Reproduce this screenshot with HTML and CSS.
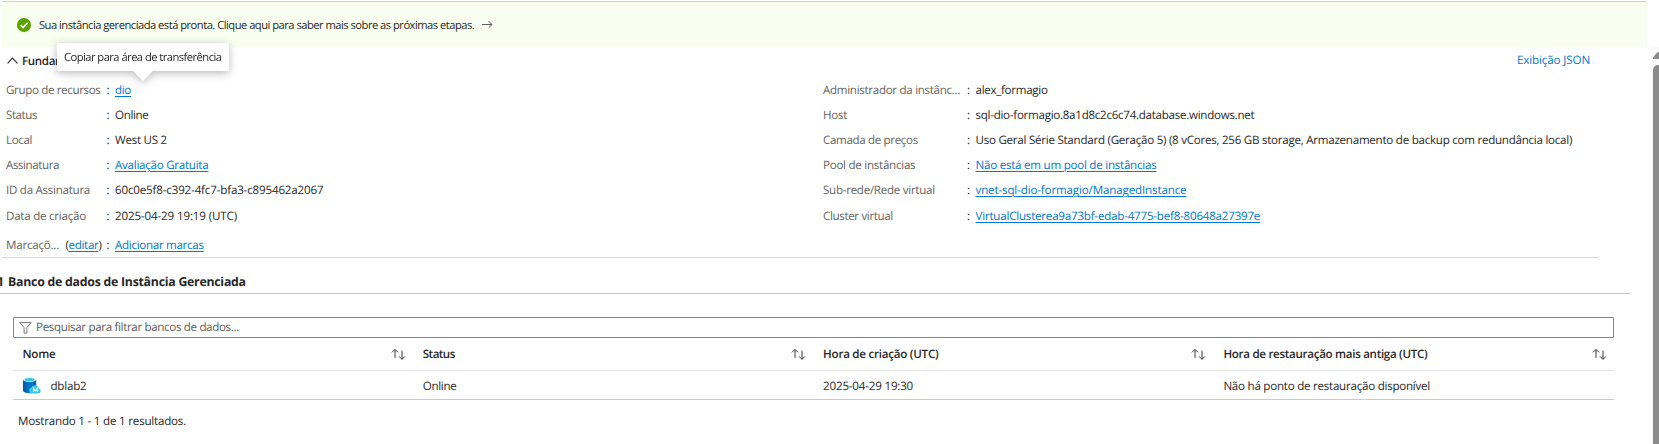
FILE: index.html
```
<!DOCTYPE html>
<html lang="pt-BR">
<head>
<meta charset="utf-8">
<title>Instância gerenciada</title>
<link rel="stylesheet" href="styles.css">
</head>
<body>
<svg class="defs" aria-hidden="true">
  <symbol id="sort" viewBox="0 0 15 13"><path d="M4 9.8V1.6M1 4.4 4 1.4l3 3M11 2.6v8.6M8 8.4l3 3 3-3" fill="none" stroke="#3a3938" stroke-width="1"/></symbol>
</svg>
<div class="page">
  <div class="banner">
    <svg class="ok" viewBox="0 0 14 14"><circle cx="7" cy="7" r="7" fill="#57a300"/><path d="M3.6 7.2 6 9.6l4.5-4.7" fill="none" stroke="#fff" stroke-width="1.7"/></svg>
    <span class="banner-text">Sua instância gerenciada está pronta. Clique aqui para saber mais sobre as próximas etapas.</span>
    <svg class="arrow" viewBox="0 0 11 9"><path d="M0 4.5h10M6.6 1.1 10 4.5 6.6 7.9" fill="none" stroke="#605e5c" stroke-width="1"/></svg>
  </div>
  <div class="body">
    <div class="content">
      <div class="section-head">
        <svg class="chev" viewBox="0 0 11 7"><path d="M.6 6.3 5.5 1.2l4.9 5.1" fill="none" stroke="#323130" stroke-width="1.2"/></svg>
        <span class="section-title">Fundamentos</span>
        <a class="json">Exibição JSON</a>
        <div class="tooltip">Copiar para área de transferência</div>
      </div>
      <div class="details">
        <div class="col">
          <div class="row"><span class="label t36">Grupo de recursos</span><span class="colon">:</span><a class="link t33">dio</a></div>
          <div class="row"><span class="label t45">Status</span><span class="colon">:</span><span class="t35">Online</span></div>
          <div class="row"><span class="label t39">Local</span><span class="colon">:</span><span class="t26">West US 2</span></div>
          <div class="row"><span class="label t43">Assinatura</span><span class="colon">:</span><a class="link t29">Avaliação Gratuita</a></div>
          <div class="row"><span class="label t28">ID da Assinatura</span><span class="colon">:</span><span class="t17">60c0e5f8-c392-4fc7-bfa3-c895462a2067</span></div>
          <div class="row late"><span class="label t25">Data de criação</span><span class="colon">:</span><span class="t14">2025-04-29 19:19 (UTC)</span></div>
          <div class="row tags"><span class="label t23">Marcaçõ... <span class="edit t33">(<a class="link">editar</a>)</span></span><span class="colon">:</span><a class="link t31">Adicionar marcas</a></div>
        </div>
        <div class="col wide">
          <div class="row"><span class="label t31">Administrador da instânc...</span><span class="colon">:</span><span class="t31">alex_formagio</span></div>
          <div class="row"><span class="label t29">Host</span><span class="colon">:</span><span class="t28">sql-dio-formagio.8a1d8c2c6c74.database.windows.net</span></div>
          <div class="row"><span class="label t35">Camada de preços</span><span class="colon">:</span><span class="t26">Uso Geral Série Standard (Geração 5) (8 vCores, 256 GB storage, Armazenamento de backup com redundância local)</span></div>
          <div class="row"><span class="label t29">Pool de instâncias</span><span class="colon">:</span><a class="link t25">Não está em um pool de instâncias</a></div>
          <div class="row"><span class="label t28">Sub-rede/Rede virtual</span><span class="colon">:</span><a class="link t15">vnet-sql-dio-formagio/ManagedInstance</a></div>
          <div class="row late"><span class="label t36">Cluster virtual</span><span class="colon">:</span><a class="link t24">VirtualClusterea9a73bf-edab-4775-bef8-80648a27397e</a></div>
        </div>
      </div>
      <h2 class="db-title"><span class="count">1</span>Banco de dados de Instância Gerenciada</h2>
      <div class="search">
        <svg class="funnel" viewBox="0 0 13 12"><path d="M.8.6h11.4L7.9 5.7v5.4H5.1V5.7z" fill="none" stroke="#7a7876" stroke-width="1"/></svg>
        <span class="t34">Pesquisar para filtrar bancos de dados...</span>
      </div>
      <div class="grid head">
        <div class="cell"><span class="t23">Nome</span><svg class="sort"><use href="#sort"/></svg></div>
        <div class="cell"><span class="t50">Status</span><svg class="sort"><use href="#sort"/></svg></div>
        <div class="cell"><span class="t27">Hora de criação (UTC)</span><svg class="sort"><use href="#sort"/></svg></div>
        <div class="cell"><span class="t31">Hora de restauração mais antiga (UTC)</span><svg class="sort"><use href="#sort"/></svg></div>
      </div>
      <div class="grid data">
        <div class="cell"><svg class="db" viewBox="0 0 18 17">
          <defs><linearGradient id="cyl"><stop offset="0" stop-color="#005ba1"/><stop offset=".5" stop-color="#0078d4"/><stop offset="1" stop-color="#0062ad"/></linearGradient></defs>
          <path d="M0 2.6v10.9C0 15 3 16.2 6.6 16.2s6.6-1.2 6.6-2.7V2.6z" fill="url(#cyl)"/>
          <ellipse cx="6.6" cy="2.6" rx="6.6" ry="2.5" fill="#e3f3fb"/><ellipse cx="6.6" cy="2.6" rx="5" ry="1.6" fill="#32c4e8"/>
          <path d="M9.4 16.6h5.8a2.8 2.8 0 0 0 .6-5.4 3.9 3.9 0 0 0-7.3-.7 3.1 3.1 0 0 0 .9 6.1z" fill="#38c8ee"/>
          <path d="M10.6 15v-3.7l1.9 2.5 1.9-2.5V15" fill="none" stroke="#fff" stroke-width="1.1"/></svg><span class="t22">dblab2</span></div>
        <div class="cell"><span class="t35">Online</span></div>
        <div class="cell"><span class="t20">2025-04-29 19:30</span></div>
        <div class="cell"><span class="t27">Não há ponto de restauração disponível</span></div>
      </div>
      <div class="summary t21">Mostrando 1 - 1 de 1 resultados.</div>
    </div>
    <div class="scrollbar"><svg class="up" viewBox="0 0 6 7"><path d="M0 7V5.6L3.6.9Q4.4 0 6 0v7z" fill="#8b8b8b"/></svg><div class="thumb"></div></div>
  </div>
</div>
</body>
</html>
```
FILE: styles.css
```
* { box-sizing: border-box; }
body { margin: 0; background: #fff; }
.defs { position: absolute; width: 0; height: 0; }
.page { width: 1659px; height: 444px; overflow: hidden; display: flex; flex-direction: column; padding-top: 1px; font: 11.6px/25px "Open Sans", "Noto Sans", sans-serif; color: #292827; white-space: nowrap; text-rendering: geometricPrecision; }
svg { display: block; flex: none; }
.banner { margin: 0 12px 0 2px; height: 46px; border-top: 1px solid #d2d2d0; background: #f8fff0; display: flex; align-items: center; padding-left: 15px; }
.ok { width: 14px; height: 14px; margin-right: 8px; }
.banner-text { font-size: 11.2px; letter-spacing: -.515px; width: 443px; padding-top: 1px; }
.arrow { width: 11px; height: 9px; }
.body { display: flex; flex: 1; }
.content { width: 1650px; }
.section-head { position: relative; height: 30px; display: flex; align-items: center; padding: 0 60px 3px 7px; }
.chev { width: 11px; height: 7px; margin-right: 4px; }
.section-title { font-weight: 600; letter-spacing: -.35px; margin-top: 2px; }
.json { margin-left: auto; color: #0078d4; letter-spacing: -.131px; }
.tooltip { position: absolute; left: 57px; top: -4px; width: 172px; height: 28px; line-height: 29px; padding-left: 7px; background: #fff; font-size: 11.2px; letter-spacing: -.54px; filter: drop-shadow(0 2px 4px rgba(0,0,0,.28)); border-radius: 1px; }
.tooltip::after { content: ""; position: absolute; left: 76px; top: 28px; border: 10px solid transparent; border-top-color: #fff; border-bottom: 0; }
.details { display: grid; grid-template-columns: 817px 1fr; width: 1597px; height: 181px; margin-left: 2px; padding: 1px 0 0 4px; border-bottom: 1px solid #d6d6d6; }
.row { display: flex; height: 25px; }
.label { width: 100.5px; color: #666462; display: flex; }
.wide .label { width: 144px; }
.edit { margin-left: auto; padding-right: 5px; color: #292827; }
.colon { width: 8.5px; }
.late { padding-top: 1px; }
.tags { margin-top: 5px; }
.link { color: #0078d4; text-decoration: underline; text-underline-offset: 2px; text-decoration-thickness: 1px; }
.db-title { margin: 0 0 23px; width: 1630px; height: 36px; padding-top: 11px; line-height: 25px; font-size: 12.3px; font-weight: 700; letter-spacing: -.24px; border-bottom: 1px solid #c8c8c8; display: flex; }
.count { width: 8px; margin-left: -3px; margin-right: 3px; }
.search { margin-left: 13px; width: 1601px; height: 21px; border: 1px solid #868583; border-radius: 1px; display: flex; align-items: center; color: #605e5c; padding-left: 5px; }
.funnel { width: 13px; height: 12px; margin-right: 4px; }
.grid { display: grid; grid-template-columns: repeat(4, 400.3px); margin-left: 13px; width: 1601px; padding-left: 9.5px; }
.head { height: 33px; padding-top: 4px; font-weight: 600; border-bottom: 1px solid #e6e6e6; }
.data { height: 29px; padding-top: 3px; border-bottom: 1px solid #cacaca; }
.cell { height: 25px; display: flex; align-items: center; }
.sort { width: 15px; height: 13px; margin-left: auto; margin-right: 17px; }
.db { width: 18px; height: 17px; margin: 0 10px 2px 0; }
.summary { margin: 9px 0 0 18px; }
.scrollbar { width: 9px; padding: 5px 0 0 3px; background: #fafafa; }
.up { width: 6px; height: 7px; }
.thumb { height: 379px; margin-top: 6px; background: #8b8b8b; border-top-left-radius: 5px; }
.t14 { letter-spacing: -.14px; }
.t15 { letter-spacing: -.15px; }
.t17 { letter-spacing: -.17px; }
.t20 { letter-spacing: -.195px; }
.t21 { letter-spacing: -.21px; }
.t22 { letter-spacing: -.22px; }
.t23 { letter-spacing: -.23px; }
.t24 { letter-spacing: -.22px; }
.t25 { letter-spacing: -.25px; }
.t26 { letter-spacing: -.261px; }
.t27 { letter-spacing: -.25px; }
.t28 { letter-spacing: -.28px; }
.t29 { letter-spacing: -.27px; }
.t31 { letter-spacing: -.305px; }
.t33 { letter-spacing: -.335px; }
.t34 { letter-spacing: -.344px; }
.t35 { letter-spacing: -.35px; }
.t36 { letter-spacing: -.36px; }
.t39 { letter-spacing: -.39px; }
.t43 { letter-spacing: -.43px; }
.t45 { letter-spacing: -.45px; }
.t50 { letter-spacing: -.55px; }
```
